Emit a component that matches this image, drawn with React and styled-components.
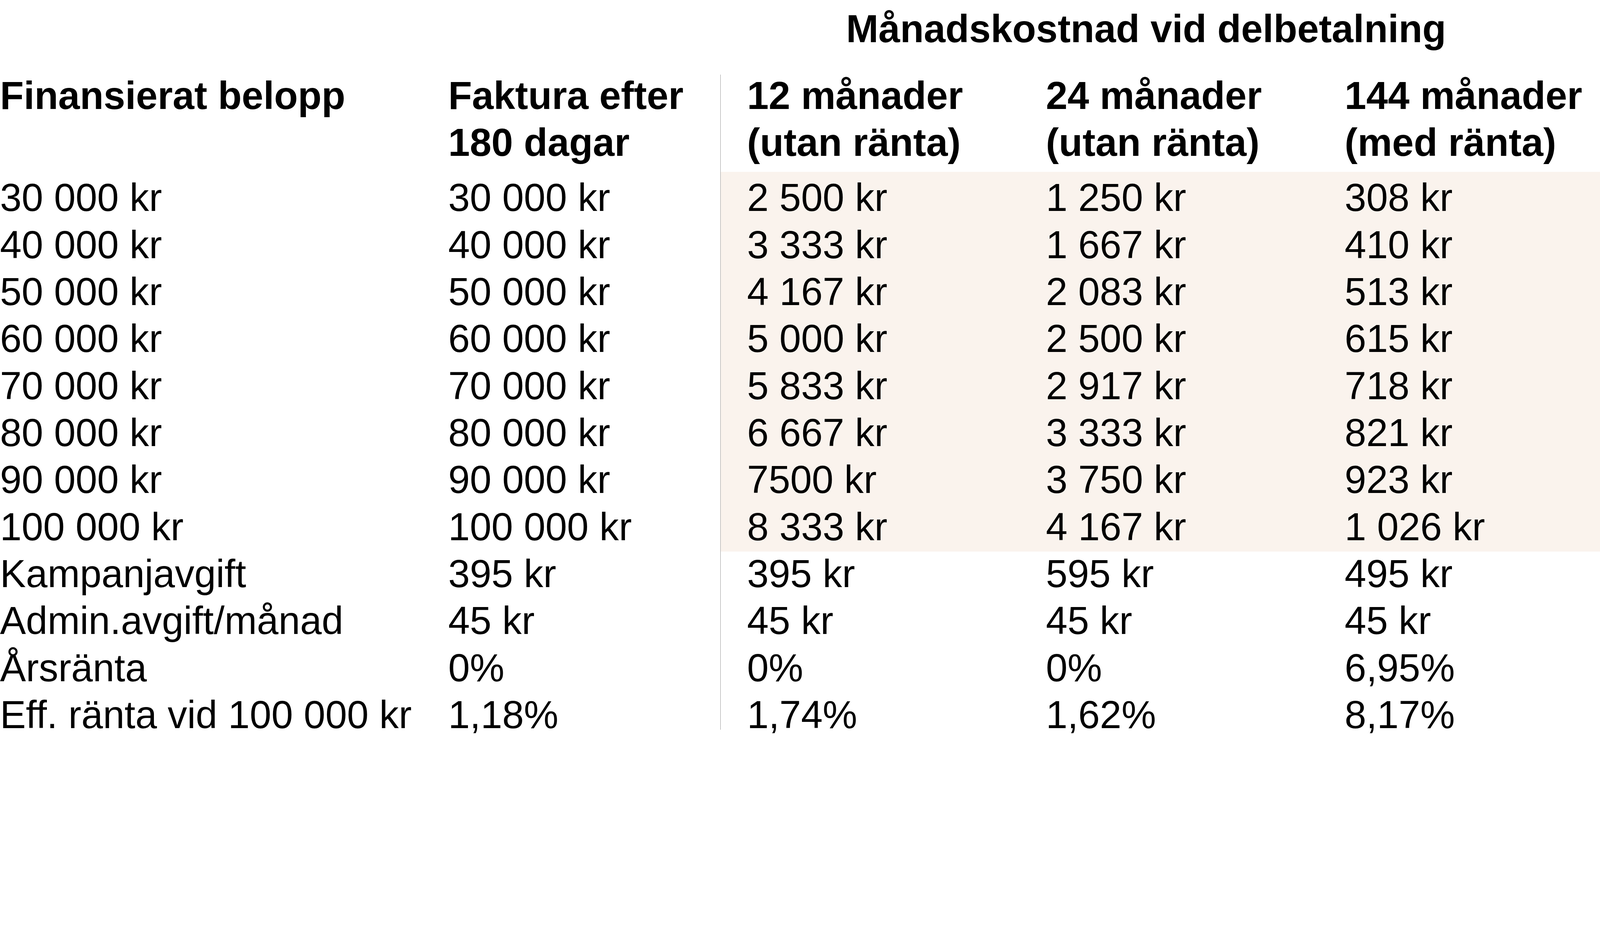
import React from 'react';
import styled, { createGlobalStyle } from 'styled-components';

// the reference is laid out on a 4819px wide canvas; scale every size to the viewport width
const u = (px) => `${((px * 100) / 4819).toFixed(5)}vw`;

const GlobalStyle = createGlobalStyle`
  html, body {
    margin: 0;
    padding: 0;
    background: #ffffff;
    overflow: hidden;
  }
  body {
    font-family: "Liberation Sans", Arial, sans-serif;
    color: #000000;
  }
`;

const Page = styled.div`
  width: 100vw;
  padding-top: ${u(17)};
  box-sizing: border-box;
  font-size: ${u(117)};
  line-height: ${u(141.6)};
`;

const Row = styled.div`
  display: grid;
  grid-template-columns: ${u(1350)} ${u(820)} ${u(900)} ${u(900)} 1fr;
  white-space: nowrap;
`;

const TitleRow = styled(Row)`
  margin-bottom: ${u(58.7)};
`;

const Title = styled.div`
  grid-column: 3 / -1;
  font-weight: 700;
  text-align: center;
  padding-right: ${u(85)};
`;

/* wraps header + body; draws the thin divider before the monthly columns */
const Table = styled.div`
  background: linear-gradient(#9a9a9a, #9a9a9a) no-repeat ${u(2170)} ${u(8)} / 1px calc(100% - ${u(34)});
`;

const HeaderRow = styled(Row)`
  font-weight: 700;
  margin-bottom: ${u(17.5)};
`;

const Shaded = styled.div`
  padding: ${u(7)} 0 ${u(3.5)};
  margin-bottom: -${u(3.5)};
  background: linear-gradient(to right, transparent ${u(2171)}, #faf3ed ${u(2171)});
`;

const Cell = styled.div`
  padding-left: ${(p) => (p.$split ? u(80) : '0')};
`;

const header = [
  ['Finansierat belopp'],
  ['Faktura efter', '180 dagar'],
  ['12 månader', '(utan ränta)'],
  ['24 månader', '(utan ränta)'],
  ['144 månader', '(med ränta)'],
];

const amounts = [
  ['30 000 kr', '30 000 kr', '2 500 kr', '1 250 kr', '308 kr'],
  ['40 000 kr', '40 000 kr', '3 333 kr', '1 667 kr', '410 kr'],
  ['50 000 kr', '50 000 kr', '4 167 kr', '2 083 kr', '513 kr'],
  ['60 000 kr', '60 000 kr', '5 000 kr', '2 500 kr', '615 kr'],
  ['70 000 kr', '70 000 kr', '5 833 kr', '2 917 kr', '718 kr'],
  ['80 000 kr', '80 000 kr', '6 667 kr', '3 333 kr', '821 kr'],
  ['90 000 kr', '90 000 kr', '7500 kr', '3 750 kr', '923 kr'],
  ['100 000 kr', '100 000 kr', '8 333 kr', '4 167 kr', '1 026 kr'],
];

const fees = [
  ['Kampanjavgift', '395 kr', '395 kr', '595 kr', '495 kr'],
  ['Admin.avgift/månad', '45 kr', '45 kr', '45 kr', '45 kr'],
  ['Årsränta', '0%', '0%', '0%', '6,95%'],
  ['Eff. ränta vid 100 000 kr', '1,18%', '1,74%', '1,62%', '8,17%'],
];

const DataRow = ({ cells }) => (
  <Row>
    {cells.map((c, i) => (
      <Cell key={i} $split={i >= 2}>{c}</Cell>
    ))}
  </Row>
);

const App = () => {
  return (
    <>
      <GlobalStyle />
      <Page>
        <TitleRow>
          <Title>Månadskostnad vid delbetalning</Title>
        </TitleRow>
        <Table>
          <HeaderRow>
            {header.map((lines, i) => (
              <Cell key={i} $split={i >= 2}>
                {lines.map((l, j) => (
                  <div key={j}>{l}</div>
                ))}
              </Cell>
            ))}
          </HeaderRow>
          <Shaded>
            {amounts.map((r, i) => (
              <DataRow key={i} cells={r} />
            ))}
          </Shaded>
          {fees.map((r, i) => (
            <DataRow key={i} cells={r} />
          ))}
        </Table>
      </Page>
    </>
  );
};

export default App;
